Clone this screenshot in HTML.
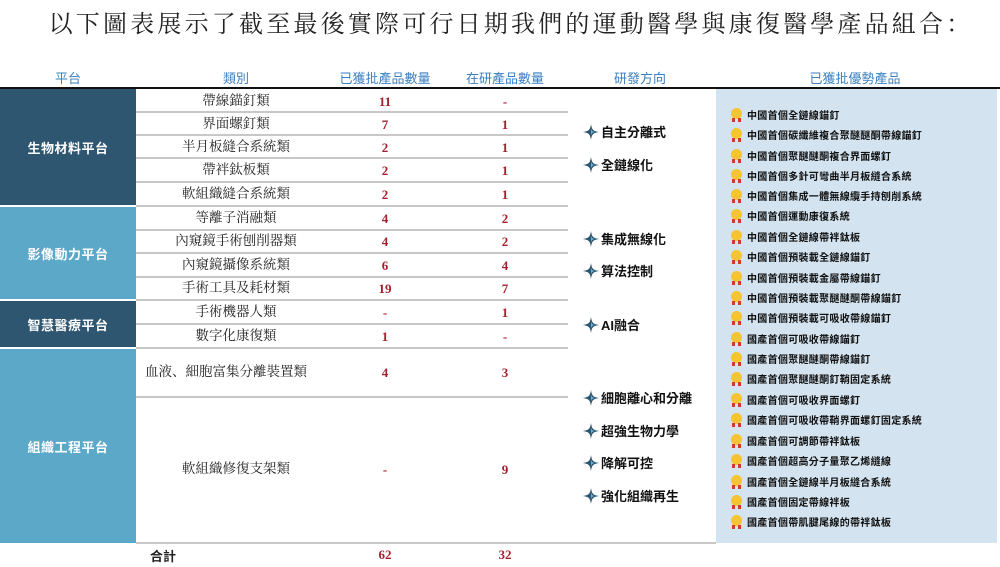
<!DOCTYPE html>
<html><head><meta charset="utf-8"><style>
*{margin:0;padding:0;box-sizing:border-box}
body{width:1000px;height:567px;background:#fff;position:relative;overflow:hidden;font-family:"Liberation Sans","Noto Sans CJK TC",sans-serif}
.a{position:absolute}
.title{left:0;width:1000px;top:4px;text-align:center;font-family:"Liberation Serif","Noto Serif CJK SC",serif;font-size:24px;letter-spacing:3.2px;color:#222;padding-left:22px}
.hd{top:68px;font-size:13px;color:#3a7fc0;text-align:center}
.plat{left:0;width:136px;color:#fff;font-size:13px;display:flex;align-items:center;justify-content:center;font-weight:bold;letter-spacing:0.5px}
.cat{left:136px;width:200px;text-align:center;font-family:"Liberation Serif","Noto Serif CJK SC",serif;font-size:13.5px;color:#222;margin-top:-3px}
.n1{left:350px;width:70px;text-align:center;font-family:"Liberation Serif",serif;font-weight:bold;font-size:13px;color:#a3212e;margin-top:1px}
.n2{left:470px;width:70px;text-align:center;font-family:"Liberation Serif",serif;font-weight:bold;font-size:13px;color:#a3212e;margin-top:1px}
.ln{left:136px;width:432px;height:2px;background:#c8c8c8}
.dir{left:583px;font-size:13px;color:#111;font-weight:bold;display:flex;align-items:center}
.dir svg{margin-right:2px}
.panel{left:716px;top:89px;width:281px;height:454px;background:#d3e3ef}
.pi{left:731px;font-size:10px;color:#111;font-weight:bold;display:flex;align-items:center;letter-spacing:0.3px}
.pi i{display:inline-block;width:11px;height:14px;margin-right:5px;position:relative}
.pi i:before{content:"";position:absolute;left:0;top:0;width:11px;height:11px;border-radius:50%;background:#f5c431}
.pi i:after{content:"";position:absolute;left:1px;top:10px;width:9px;height:4px;background:linear-gradient(90deg,#d23a2a 0 3px,transparent 3px 6px,#d23a2a 6px)}
</style></head><body>
<div class="a title">以下圖表展示了截至最後實際可行日期我們的運動醫學與康復醫學產品組合：</div>
<div class="a hd" style="left:30px;width:76px">平台</div>
<div class="a hd" style="left:196px;width:80px">類別</div>
<div class="a hd" style="left:330px;width:110px">已獲批產品數量</div>
<div class="a hd" style="left:455px;width:100px">在研產品數量</div>
<div class="a hd" style="left:595px;width:90px">研發方向</div>
<div class="a hd" style="left:780px;width:150px">已獲批優勢產品</div>
<div class="a" style="left:0;top:87px;width:1000px;height:2px;background:#111"></div>

<div class="a plat" style="top:89px;height:116px;background:#2e5670">生物材料平台</div>
<div class="a plat" style="top:207px;height:92px;background:#5ba8c9">影像動力平台</div>
<div class="a plat" style="top:301px;height:46px;background:#2e5670">智慧醫療平台</div>
<div class="a plat" style="top:349px;height:194px;background:#5ba8c9">組織工程平台</div>

<div class="a panel"></div>

<div class="a ln" style="top:111px"></div>
<div class="a ln" style="top:134px"></div>
<div class="a ln" style="top:157px"></div>
<div class="a ln" style="top:181px"></div>
<div class="a ln" style="top:205px"></div>
<div class="a ln" style="top:229px"></div>
<div class="a ln" style="top:252px"></div>
<div class="a ln" style="top:276px"></div>
<div class="a ln" style="top:299px"></div>
<div class="a ln" style="top:323px"></div>
<div class="a ln" style="top:347px"></div>
<div class="a ln" style="top:396px"></div>
<div class="a" style="left:136px;top:542px;width:580px;height:2px;background:#c8c8c8"></div>

<div class="a cat" style="top:92px">帶線錨釘類</div><div class="a n1" style="top:93px">11</div><div class="a n2" style="top:93px">-</div>
<div class="a cat" style="top:115px">界面螺釘類</div><div class="a n1" style="top:116px">7</div><div class="a n2" style="top:116px">1</div>
<div class="a cat" style="top:138px">半月板縫合系統類</div><div class="a n1" style="top:139px">2</div><div class="a n2" style="top:139px">1</div>
<div class="a cat" style="top:161px">帶袢鈦板類</div><div class="a n1" style="top:162px">2</div><div class="a n2" style="top:162px">1</div>
<div class="a cat" style="top:185px">軟組織縫合系統類</div><div class="a n1" style="top:186px">2</div><div class="a n2" style="top:186px">1</div>
<div class="a cat" style="top:209px">等離子消融類</div><div class="a n1" style="top:210px">4</div><div class="a n2" style="top:210px">2</div>
<div class="a cat" style="top:232px">內窺鏡手術刨削器類</div><div class="a n1" style="top:233px">4</div><div class="a n2" style="top:233px">2</div>
<div class="a cat" style="top:256px">內窺鏡攝像系統類</div><div class="a n1" style="top:257px">6</div><div class="a n2" style="top:257px">4</div>
<div class="a cat" style="top:279px">手術工具及耗材類</div><div class="a n1" style="top:280px">19</div><div class="a n2" style="top:280px">7</div>
<div class="a cat" style="top:303px">手術機器人類</div><div class="a n1" style="top:304px">-</div><div class="a n2" style="top:304px">1</div>
<div class="a cat" style="top:327px">數字化康復類</div><div class="a n1" style="top:328px">1</div><div class="a n2" style="top:328px">-</div>
<div class="a cat" style="top:363px;left:136px;width:180px">血液、細胞富集分離裝置類</div><div class="a n1" style="top:364px">4</div><div class="a n2" style="top:364px">3</div>
<div class="a cat" style="top:460px">軟組織修復支架類</div><div class="a n1" style="top:461px">-</div><div class="a n2" style="top:461px">9</div>
<div class="a" style="left:150px;top:546px;font-size:13px;font-weight:bold;color:#222">合計</div>
<div class="a n1" style="top:546px">62</div><div class="a n2" style="top:546px">32</div>

<svg width="0" height="0" style="position:absolute"><defs><symbol id="st" viewBox="0 0 16 16"><path d="M8 0 C9 6 10 7 16 8 C10 9 9 10 8 16 C7 10 6 9 0 8 C6 7 7 6 8 0Z" fill="#2e5670"/><path d="M8 4 C8.5 7 9 7.5 12 8 C9 8.5 8.5 9 8 12 Z" fill="#6fb3d6"/></symbol></defs></svg>
<div class="a dir" style="top:122px"><svg width="16" height="16"><use href="#st"/></svg>自主分離式</div>
<div class="a dir" style="top:155px"><svg width="16" height="16"><use href="#st"/></svg>全鏈線化</div>
<div class="a dir" style="top:229px"><svg width="16" height="16"><use href="#st"/></svg>集成無線化</div>
<div class="a dir" style="top:261px"><svg width="16" height="16"><use href="#st"/></svg>算法控制</div>
<div class="a dir" style="top:315px"><svg width="16" height="16"><use href="#st"/></svg>AI融合</div>
<div class="a dir" style="top:388px"><svg width="16" height="16"><use href="#st"/></svg>細胞離心和分離</div>
<div class="a dir" style="top:421px"><svg width="16" height="16"><use href="#st"/></svg>超強生物力學</div>
<div class="a dir" style="top:453px"><svg width="16" height="16"><use href="#st"/></svg>降解可控</div>
<div class="a dir" style="top:486px"><svg width="16" height="16"><use href="#st"/></svg>強化組織再生</div>

<div class="a pi" style="top:107px"><i></i>中國首個全鏈線錨釘</div>
<div class="a pi" style="top:127px"><i></i>中國首個碳纖維複合聚醚醚酮帶線錨釘</div>
<div class="a pi" style="top:148px"><i></i>中國首個聚醚醚酮複合界面螺釘</div>
<div class="a pi" style="top:168px"><i></i>中國首個多針可彎曲半月板縫合系統</div>
<div class="a pi" style="top:188px"><i></i>中國首個集成一體無線纜手持刨削系統</div>
<div class="a pi" style="top:208px"><i></i>中國首個運動康復系統</div>
<div class="a pi" style="top:229px"><i></i>中國首個全鏈線帶袢鈦板</div>
<div class="a pi" style="top:249px"><i></i>中國首個預裝載全鏈線錨釘</div>
<div class="a pi" style="top:270px"><i></i>中國首個預裝載金屬帶線錨釘</div>
<div class="a pi" style="top:290px"><i></i>中國首個預裝載聚醚醚酮帶線錨釘</div>
<div class="a pi" style="top:310px"><i></i>中國首個預裝載可吸收帶線錨釘</div>
<div class="a pi" style="top:331px"><i></i>國產首個可吸收帶線錨釘</div>
<div class="a pi" style="top:351px"><i></i>國產首個聚醚醚酮帶線錨釘</div>
<div class="a pi" style="top:371px"><i></i>國產首個聚醚醚酮釘鞘固定系統</div>
<div class="a pi" style="top:392px"><i></i>國產首個可吸收界面螺釘</div>
<div class="a pi" style="top:412px"><i></i>國產首個可吸收帶鞘界面螺釘固定系統</div>
<div class="a pi" style="top:433px"><i></i>國產首個可調節帶袢鈦板</div>
<div class="a pi" style="top:453px"><i></i>國產首個超高分子量聚乙烯縫線</div>
<div class="a pi" style="top:474px"><i></i>國產首個全鏈線半月板縫合系統</div>
<div class="a pi" style="top:494px"><i></i>國產首個固定帶線袢板</div>
<div class="a pi" style="top:514px"><i></i>國產首個帶肌腱尾線的帶袢鈦板</div>
</body></html>
